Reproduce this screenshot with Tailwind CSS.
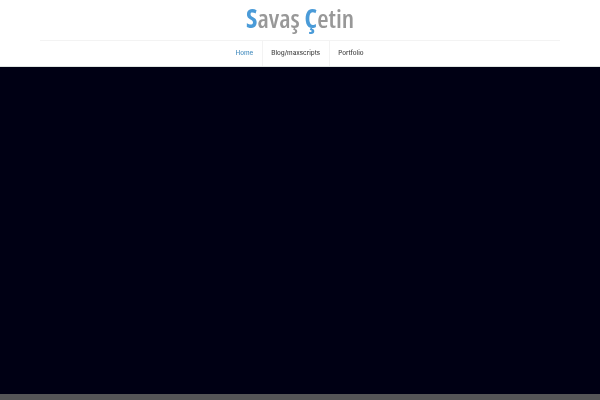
<!DOCTYPE html>
<html>
<head>
<meta charset="utf-8">
<script src="https://cdn.jsdelivr.net/npm/@tailwindcss/browser@4"></script>
</head>
<body class="bg-white h-[400px] w-[600px] overflow-hidden flex flex-col font-['Inter',sans-serif] antialiased">
<header class="h-[67px] shrink-0 flex flex-col items-center border-b border-[#dfe5e2]">
  <div class="w-[520px] h-[41px] shrink-0 border-b border-[#f3f3f3] flex justify-center items-start">
    <div class="font-['Open_Sans',sans-serif] text-[26px] leading-[36px] text-[#989898] font-semibold [font-stretch:80%] tracking-[0px] will-change-transform"><span class="text-[#4a9bd8] font-bold">S</span>avaş <span class="text-[#4a9bd8] font-bold">Ç</span>etin</div>
  </div>
  <nav class="flex h-[25px] text-[6.3px] leading-[25px] text-[#444] font-medium will-change-transform">
    <a class="px-[8.5px] text-[#4a90c0] border-r border-[#f3f3f3]">Home</a>
    <a class="px-[8.5px] border-r border-[#f3f3f3]">Blog/maxscripts</a>
    <a class="px-[8.5px]">Portfolio</a>
  </nav>
</header>
<main class="h-[327px] shrink-0 bg-[#000014]"></main>
<footer class="flex-1 bg-[#555557]"></footer>
</body>
</html>
